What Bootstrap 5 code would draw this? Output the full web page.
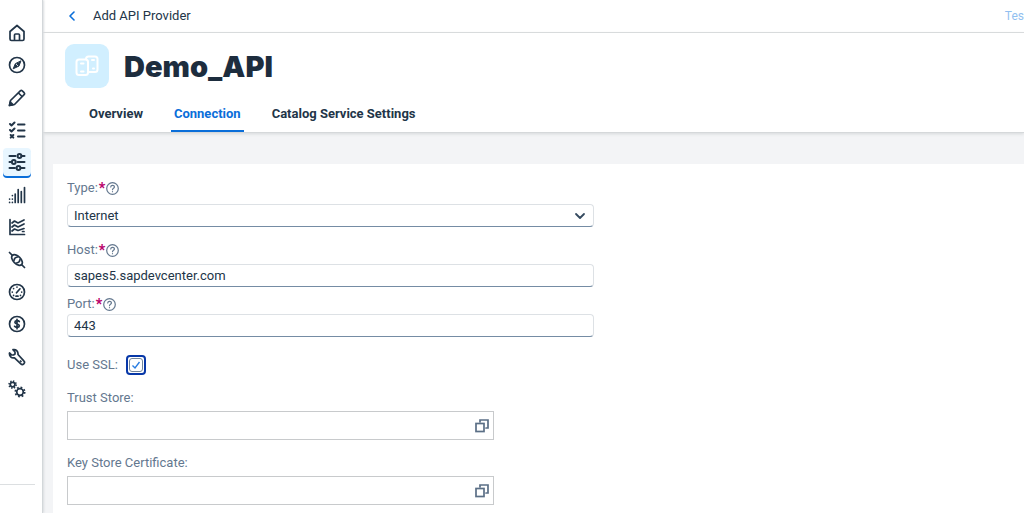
<!DOCTYPE html>
<html lang="en">
<head>
<meta charset="utf-8">
<meta name="viewport" content="width=device-width, initial-scale=1">
<title>Add API Provider</title>
<link href="https://cdn.jsdelivr.net/npm/bootstrap@5.3.0/dist/css/bootstrap.min.css" rel="stylesheet">
<style>
  :root { --ink: #223548; --label: #64788f; --accent: #0a6ed9; }
  body { font-family: Roboto, "Liberation Sans", sans-serif; font-size: 13px; line-height: 20px; color: var(--ink); background: #f3f4f6; }
  svg { display: block; fill: none; stroke: currentColor; stroke-linecap: round; stroke-linejoin: round; }
  .side { width: 43px; background: #fff; border-right: 1px solid #d3d7da; box-shadow: 1px 0 2px #d9dcdf; padding-top: 19px; z-index: 2; }
  .side-list { height: 384px; margin-left: 3px; }
  .side-link { width: 28px; height: 28px; color: var(--ink); border-radius: 4px; }
  .side-link svg { width: 18px; height: 18px; stroke-width: 1.7; }
  .side-link .bold-lines { stroke-width: 2; }
  .side-link.active { background: #e8f6ff; box-shadow: 0 2px 0 var(--accent); }
  .side-rule { height: 1px; width: 35px; background: #dcdfe1; margin-bottom: 28px; }
  .main-area { min-width: 0; }
  .crumbs { height: 33px; padding-left: 24px; background: #fff; border-bottom: 1px solid #d9dbdd; }
  .back { width: 10px; height: 20px; color: var(--accent); }
  .test { color: #92bff0; font-size: 12px; }
  .page-head { background: #fff; border-bottom: 1px solid #d5d8da; box-shadow: 0 1px 3px #d5d8da; padding: 11px 0 0 22px; }
  .avatar { width: 44px; height: 44px; border-radius: 9px; background: #d1efff; color: #fff; }
  .title { font: 900 29px/44px Inter, Roboto, sans-serif; color: #1d2d3e; padding: 1px 0 0 15px; height: 44px; }
  .tabs { gap: 25px; margin-left: 21px; padding-top: 8px; }
  .tabs .nav-link { padding: 8px 3px 6px; font-weight: 700; color: var(--ink); border-bottom: 2px solid transparent; line-height: 20px; }
  .tabs .nav-link.active { color: var(--accent); border-color: var(--accent); }
  .panel { background: #fff; margin: 31px 0 0 10px; padding: 14px 14px 8px; }
  .wide { max-width: 527px; }
  .narrow { max-width: 427px; }
  .field-label { color: var(--label); height: 20px; }
  .star { color: #ba066c; font-weight: 900; font-size: 14px; line-height: 20px; padding: 0 1px; }
  .help { width: 13px; height: 13px; color: var(--label); stroke-width: 1.2; }
  .field { height: 23px; min-height: 0; padding: 0 6px; font-size: 13px; line-height: 20px; color: var(--ink); border: 1px solid #dde1e5; border-bottom-color: #758ca4; border-radius: 4px; }
  .form-select.field { background-image: url("data:image/svg+xml,%3Csvg xmlns='http://www.w3.org/2000/svg' viewBox='0 0 12 12'%3E%3Cpath d='M2 4l4 4 4-4' fill='none' stroke='%23354a5f' stroke-width='1.800' stroke-linecap='round' stroke-linejoin='round'/%3E%3C/svg%3E"); background-size: 12px; background-position: right 7px center; }
  .ssl { width: 20px; height: 20px; border: 2px solid #0838a8; border-radius: 4px; }
  .ssl .form-check-input { width: 14px; height: 14px; margin: 0; border: 1px solid #74879b; border-radius: 3px; background-color: #fff; box-shadow: none; }
  .ssl .form-check-input:checked { background-image: url("data:image/svg+xml,%3Csvg xmlns='http://www.w3.org/2000/svg' viewBox='0 0 12 12'%3E%3Cpath d='m2.500 6.500 2.500 2.500L9.500 3' fill='none' stroke='%232a7de1' stroke-width='1.400'/%3E%3C/svg%3E"); }
  .picker { height: 29px; border: 1px solid #c8cacc; }
  .picker input { background: #fff; min-width: 0; padding: 0 6px; }
  .picker button { width: 22px; color: #5b6f86; }
  .picker svg { width: 14px; height: 14px; stroke-width: 1.7; stroke-linejoin: miter; }
  .gap-a { margin-top: 13px; } .gap-b { margin-top: 7px; } .gap-c { margin-top: 18px; }
  .gap-t { margin-top: 6px; } .label-end { margin-bottom: 3px; }
</style>
</head>
<body>
<div class="d-flex min-vh-100">
  <nav class="side d-flex flex-column flex-shrink-0" aria-label="Main">
    <div class="side-list d-flex flex-column justify-content-between">
      <a href="#" class="side-link d-flex align-items-center justify-content-center" aria-label="Home"><svg viewBox="0 0 18 18"><path d="M2 7.500 9 1.500l7 6V15a1.500 1.500 0 0 1-1.500 1.500h-11A1.500 1.500 0 0 1 2 15zM6.500 16v-5a1 1 0 0 1 1-1h3a1 1 0 0 1 1 1v5"/></svg></a>
      <a href="#" class="side-link d-flex align-items-center justify-content-center" aria-label="Discover"><svg viewBox="0 0 18 18"><circle cx="9" cy="9" r="7.500"/><path d="M12.800 5.200 11 10 5.200 12.800 7.200 8z" fill="currentColor" stroke-width="1"/><path d="m8.300 8.300 1.400 1.400" stroke="#fff" stroke-width=".8"/></svg></a>
      <a href="#" class="side-link d-flex align-items-center justify-content-center" aria-label="Design"><svg viewBox="0 0 18 18"><path d="m1.500 16.500 1-5L12.300 1.900a1.500 1.500 0 0 1 2 0l1.800 1.800a1.500 1.500 0 0 1 0 2L6.500 15.500zM10.500 4l3.500 3.500"/><path d="m1.500 16.500.8-3.500 2.700 2.700z" fill="currentColor"/></svg></a>
      <a href="#" class="side-link d-flex align-items-center justify-content-center" aria-label="Test"><svg class="bold-lines" viewBox="0 0 18 18"><path d="M10 3.500h6.500M10 9.500h6.500M10 15.500h6.500M2 3 3.500 4.500 6.500 1.500M2 9l1.500 1.500 3-3M2.700 14l2.600 2.600M5.300 14l-2.600 2.600"/></svg></a>
      <a href="#" class="side-link active d-flex align-items-center justify-content-center" aria-label="Configure" aria-current="page"><svg class="bold-lines" viewBox="0 0 18 18"><path d="M1.500 3h6M13.500 3h3M1.500 9h1M9.500 9h7M1.500 15H7M13 15h3.500"/><circle cx="11.500" cy="3" r="1.900"/><circle cx="5.800" cy="9" r="1.900"/><circle cx="10.500" cy="15" r="1.900"/></svg></a>
      <a href="#" class="side-link d-flex align-items-center justify-content-center" aria-label="Analyze"><svg viewBox="0 0 18 18"><path d="M16.500 1.500v15M13.300 5.500v11M10.200 3.500v13M7.200 8v8.500M4.400 9.500v.1M4.400 13v.1M4.400 16.400v.1M1.600 13v.1M1.600 16.400v.1"/></svg></a>
      <a href="#" class="side-link d-flex align-items-center justify-content-center" aria-label="Monetize"><svg viewBox="0 0 18 18"><path d="M2 1.500v15h14.500M4 5 6.500 3l3.500 2 6-3M4 9 6.500 7l3.500 2 6-3M4 13l2.500-2 3.500 1.500 6-2M14.500 13.500H16"/></svg></a>
      <a href="#" class="side-link d-flex align-items-center justify-content-center" aria-label="Connect"><svg viewBox="0 0 18 18"><path d="m1.500 1.500 3 3M13.500 13.500l3 3"/><ellipse cx="9" cy="9" rx="6.600" ry="3.700" transform="rotate(45 9 9)"/><path d="M6 9.500c.2-2 1.500-3.300 3.500-3.500M12 8.500c-.2 2-1.500 3.300-3.500 3.500"/></svg></a>
      <a href="#" class="side-link d-flex align-items-center justify-content-center" aria-label="Monitor"><svg viewBox="0 0 18 18"><circle cx="9" cy="9" r="7.500"/><path d="m8.500 9.800 3.500-4"/><path d="M9 4v.1M5.600 5.500v.1M4.300 9v.1M5.600 12.400v.1M13.700 9v.1M12.500 12.400v.1M8 13.200h2"/></svg></a>
      <a href="#" class="side-link d-flex align-items-center justify-content-center" aria-label="Billing"><svg viewBox="0 0 18 18"><circle cx="9" cy="9" r="7.500"/><path d="M11.300 6.500C10.500 5.300 7 5.200 6.900 7.200c0 2.200 4.400 1.300 4.400 3.500 0 2-3.600 2.100-4.700.6M9 4.300v9.400"/></svg></a>
      <a href="#" class="side-link d-flex align-items-center justify-content-center" aria-label="Settings"><svg viewBox="0 0 18 18"><path d="M5 1.700 7 4v2L5.500 7 3.500 6.800 1.500 5c-.5 3 2 5.500 5 4.800l6.300 6a1.700 1.700 0 0 0 3-3L10 6.500C10.300 3 8 1 5 1.700zM12.500 13l.5.500"/></svg></a>
      <a href="#" class="side-link d-flex align-items-center justify-content-center" aria-label="Administration"><svg viewBox="0 0 18 18"><circle cx="4.600" cy="4.600" r="2.300"/><circle cx="4.600" cy="4.600" r="3.500" stroke-dasharray="1.300 1.450" stroke-linecap="butt"/><circle cx="12" cy="12" r="3.300"/><circle cx="12" cy="12" r="4.700" stroke-dasharray="1.800 1.890" stroke-linecap="butt"/></svg></a>
    </div>
    <div class="side-rule mt-auto"></div>
  </nav>
  <div class="main-area flex-grow-1">
    <div class="crumbs d-flex align-items-center">
      <a href="#" class="back d-flex align-items-center" aria-label="Back"><svg width="10" height="10" viewBox="0 0 10 10" stroke-width="1.600"><path d="M7 1 3 5l4 4"/></svg></a>
      <span class="ms-3">Add API Provider</span>
      <a href="#" class="test ms-auto text-decoration-none">Tes</a>
    </div>
    <header class="page-head">
      <div class="d-flex align-items-center">
        <div class="avatar d-flex align-items-center justify-content-center"><svg width="24" height="24" viewBox="0 0 24 24" stroke-width="2"><rect x="11" y="2.500" width="11.500" height="15.500" rx="2.500"/><path d="M17 6h2M18 14.500h1"/><rect x="1.500" y="5.500" width="11.500" height="15.500" rx="2.500" fill="#d1efff"/><path d="M6 9.500h2.500M6 17.500h2.500"/></svg></div>
        <h1 class="title m-0">Demo_API</h1>
      </div>
      <nav class="tabs nav" aria-label="Sections">
        <a class="nav-link" href="#">Overview</a>
        <a class="nav-link active" href="#" aria-current="page">Connection</a>
        <a class="nav-link" href="#">Catalog Service Settings</a>
      </nav>
    </header>
    <main class="panel">
      <form>
        <div class="wide">
          <div class="field-label d-flex align-items-center"><label for="type">Type:</label><span class="star">*</span><svg class="help" viewBox="0 0 13 13"><circle cx="6.500" cy="6.500" r="5.800"/><path d="M4.700 5c.2-2.300 3.800-2.200 3.700 0 0 1.300-1.900 1.200-1.900 2.700M6.500 9.600v.1"/></svg></div>
          <select id="type" class="form-select field gap-t"><option>Internet</option></select>
          <div class="field-label d-flex align-items-center gap-a mb-1"><label for="host">Host:</label><span class="star">*</span><svg class="help" viewBox="0 0 13 13"><circle cx="6.500" cy="6.500" r="5.800"/><path d="M4.700 5c.2-2.300 3.800-2.200 3.700 0 0 1.300-1.900 1.200-1.900 2.700M6.500 9.600v.1"/></svg></div>
          <input id="host" class="form-control field" type="text" value="sapes5.sapdevcenter.com">
          <div class="field-label d-flex align-items-center gap-b"><label for="port">Port:</label><span class="star">*</span><svg class="help" viewBox="0 0 13 13"><circle cx="6.500" cy="6.500" r="5.800"/><path d="M4.700 5c.2-2.300 3.800-2.200 3.700 0 0 1.300-1.900 1.200-1.900 2.700M6.500 9.600v.1"/></svg></div>
          <input id="port" class="form-control field" type="text" value="443">
        </div>
        <div class="d-flex align-items-center gap-c">
          <label class="field-label" for="ssl">Use SSL:</label>
          <span class="ssl d-flex align-items-center justify-content-center ms-2"><input id="ssl" class="form-check-input" type="checkbox" checked></span>
        </div>
        <div class="narrow">
          <label class="field-label d-block gap-a label-end" for="trust">Trust Store:</label>
          <div class="picker d-flex"><input id="trust" class="border-0 flex-grow-1" type="text"><button type="button" class="btn p-0 border-0 rounded-0 d-flex align-items-center justify-content-center" aria-label="Choose trust store"><svg viewBox="0 0 14 14"><path d="M5 3V1h8v8h-2"/><rect x="1" y="4.500" width="8" height="8"/></svg></button></div>
          <label class="field-label d-block gap-a label-end" for="cert">Key Store Certificate:</label>
          <div class="picker d-flex"><input id="cert" class="border-0 flex-grow-1" type="text"><button type="button" class="btn p-0 border-0 rounded-0 d-flex align-items-center justify-content-center" aria-label="Choose key store certificate"><svg viewBox="0 0 14 14"><path d="M5 3V1h8v8h-2"/><rect x="1" y="4.500" width="8" height="8"/></svg></button></div>
        </div>
      </form>
    </main>
  </div>
</div>
<script src="https://cdn.jsdelivr.net/npm/bootstrap@5.3.0/dist/js/bootstrap.bundle.min.js"></script>
</body>
</html>
